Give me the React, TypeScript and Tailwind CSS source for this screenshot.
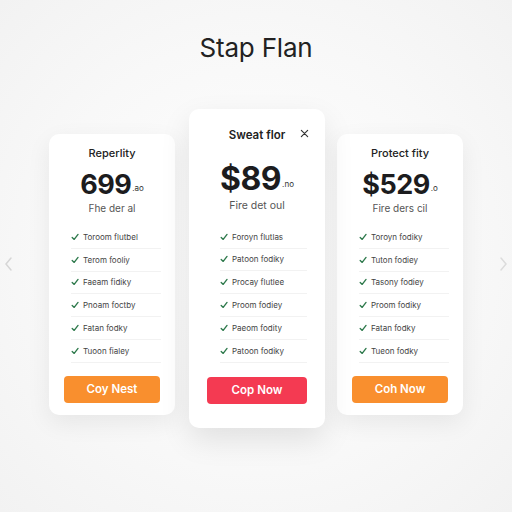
import React from "react";

type Plan = {
  title: string;
  price: string;
  suffix: string;
  desc: string;
  features: string[];
  button: string;
  featured?: boolean;
};

const plans: Plan[] = [
  {
    title: "Reperlity",
    price: "699",
    suffix: ".ao",
    desc: "Fhe der al",
    features: ["Toroom flutbel", "Terom fooliy", "Faeam fidiky", "Pnoam foctby", "Fatan fodky", "Tuoon fialey"],
    button: "Coy Nest",
  },
  {
    title: "Sweat flor",
    price: "$89",
    suffix: ".no",
    desc: "Fire det oul",
    features: ["Foroyn flutlas", "Patoon fodiky", "Procay flutlee", "Proom fodiey", "Paeom fodity", "Patoon fodiky"],
    button: "Cop Now",
    featured: true,
  },
  {
    title: "Protect fity",
    price: "$529",
    suffix: ".o",
    desc: "Fire ders cil",
    features: ["Toroyn fodiky", "Tuton fodiey", "Tasony fodiey", "Proom fodiky", "Fatan fodky", "Tueon fodky"],
    button: "Coh Now",
  },
];

function Check() {
  return (
    <svg width="8" height="8" viewBox="0 0 10 10" fill="none">
      <path d="M1.5 5.5 L4 8 L8.8 1.8" stroke="#2f7a4d" strokeWidth="1.7" strokeLinecap="round" strokeLinejoin="round" />
    </svg>
  );
}

function Card({ p }: { p: Plan }) {
  const f = p.featured;
  return (
    <div
      className={
        f
          ? "w-[136px] h-[319px] bg-white rounded-[10px] shadow-[0_12px_30px_rgba(0,0,0,0.10)] flex flex-col relative"
          : "w-[126px] h-[281px] mt-[25px] bg-white rounded-[10px] shadow-[0_8px_24px_rgba(0,0,0,0.07)] flex flex-col"
      }
    >
      <div className={f ? "mt-[20px] h-[14px] flex items-center justify-center text-[11.5px] font-semibold text-[#222]" : "mt-[12px] h-[14px] flex items-center justify-center text-[11px] font-medium text-[#222]"}>
        {p.title}
      </div>
      {f && (
        <div className="absolute right-[16px] top-[20px] text-[#333]">
          <svg width="9" height="9" viewBox="0 0 10 10">
            <path d="M1.5 1.5 L8.5 8.5 M8.5 1.5 L1.5 8.5" stroke="#333" strokeWidth="1.3" strokeLinecap="round" />
          </svg>
        </div>
      )}
      <div className={f ? "mt-[19px] flex items-end justify-center" : "mt-[10px] flex items-end justify-center"}>
        <span className={f ? "text-[32px] leading-[34px] font-bold text-[#1c1c1e] tracking-[-0.5px]" : "text-[27px] leading-[30px] font-bold text-[#1c1c1e] tracking-[-0.5px]"}>
          {p.price}
        </span>
        <span className="text-[8px] text-[#333] mb-[6px] ml-[1px]">{p.suffix}</span>
      </div>
      <div className={f ? "mt-[2px] text-center text-[10.5px] text-[#555]" : "mt-[1px] text-center text-[10px] text-[#555]"}>{p.desc}</div>
      <div className={f ? "mt-[12px] pl-[31px] pr-[18px] flex flex-col" : "mt-[10px] pl-[22px] pr-[14px] flex flex-col"}>
        {p.features.map((t, i) => (
          <div key={i} className="h-[22.8px] flex items-center gap-[4px] border-b border-[#f2f2f2]">
            <Check />
            <span className="text-[8px] text-[#444]">{t}</span>
          </div>
        ))}
      </div>
      <div className={f ? "mt-auto mb-[24px] px-[18px]" : "mt-auto mb-[12px] px-[15px]"}>
        <div
          className={
            f
              ? "h-[27px] rounded-[4px] bg-[#f43a52] flex items-center justify-center text-white text-[11.5px] font-semibold"
              : "h-[27px] rounded-[4px] bg-[#f98f2e] flex items-center justify-center text-white text-[11.5px] font-semibold"
          }
        >
          {p.button}
        </div>
      </div>
    </div>
  );
}

export default function App() {
  return (
    <div
      className="w-[512px] h-[512px] bg-[radial-gradient(ellipse_at_center,#ffffff_0%,#f8f8f8_60%,#f2f2f2_100%)] flex flex-col items-center relative overflow-hidden"
      style={{ fontFamily: "Inter, 'Noto Sans', sans-serif" }}
    >
      <div className="mt-[32px] text-[26px] leading-[32px] text-[#222] tracking-[-0.2px]">Stap Flan</div>
      <div className="mt-[45px] flex items-start">
        <Card p={plans[0]} />
        <div className="w-[14px]" />
        <Card p={plans[1]} />
        <div className="w-[12px]" />
        <Card p={plans[2]} />
      </div>
      <div className="absolute left-[4px] top-[256px]">
        <svg width="9" height="16" viewBox="0 0 9 16">
          <path d="M7 2 L2 8 L7 14" stroke="#d6d6d6" strokeWidth="1.5" fill="none" strokeLinecap="round" />
        </svg>
      </div>
      <div className="absolute right-[4px] top-[256px]">
        <svg width="9" height="16" viewBox="0 0 9 16">
          <path d="M2 2 L7 8 L2 14" stroke="#dcdcdc" strokeWidth="1.5" fill="none" strokeLinecap="round" />
        </svg>
      </div>
    </div>
  );
}
